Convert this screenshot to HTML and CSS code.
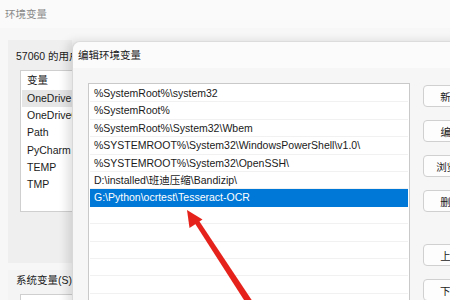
FILE: index.html
```html
<!DOCTYPE html>
<html lang="zh-CN">

<head>
    <meta charset="UTF-8">
    <title>编辑环境变量</title>
    <link rel="stylesheet" href="styles.css">
</head>

<body>
    <div class="screen">
        <!-- Background window: 环境变量 -->
        <div class="env-window">
            <div class="env-title">环境变量</div>
            <div class="env-body">
                <div class="group user-group">
                    <p class="group-label">57060 的用户变量(U)</p>
                    <div class="var-list">
                        <div class="var-head">变量</div>
                        <div class="var-row hover">OneDrive</div>
                        <div class="var-row">OneDriveConsumer</div>
                        <div class="var-row">Path</div>
                        <div class="var-row">PyCharm</div>
                        <div class="var-row">TEMP</div>
                        <div class="var-row">TMP</div>
                    </div>
                </div>
                <div class="group sys-group">
                    <p class="group-label">系统变量(S)</p>
                    <div class="var-list"></div>
                </div>
            </div>
        </div>

        <!-- Foreground dialog: 编辑环境变量 -->
        <div class="edit-dialog">
            <div class="dialog-title">编辑环境变量</div>
            <div class="dialog-body">
                <div class="path-list">
                    <div class="path-row">%SystemRoot%\system32</div>
                    <div class="path-row">%SystemRoot%</div>
                    <div class="path-row">%SystemRoot%\System32\Wbem</div>
                    <div class="path-row">%SYSTEMROOT%\System32\WindowsPowerShell\v1.0\</div>
                    <div class="path-row">%SYSTEMROOT%\System32\OpenSSH\</div>
                    <div class="path-row">D:\installed\班迪压缩\Bandizip\</div>
                    <div class="path-row selected">G:\Python\ocrtest\Tesseract-OCR</div>
                    <div class="path-row"></div>
                    <div class="path-row"></div>
                    <div class="path-row"></div>
                    <div class="path-row"></div>
                    <div class="path-row"></div>
                    <div class="path-row"></div>
                </div>
                <div class="side-buttons">
                    <div class="btn-group">
                        <button class="btn">新建(N)</button>
                        <button class="btn">编辑(E)</button>
                        <button class="btn">浏览(B)...</button>
                        <button class="btn">删除(D)</button>
                    </div>
                    <div class="btn-group">
                        <button class="btn">上移(U)</button>
                        <button class="btn">下移(O)</button>
                    </div>
                </div>
            </div>
        </div>

        <!-- Red annotation arrow -->
        <svg class="arrow" width="450" height="300" viewBox="0 0 450 300">
            <polygon points="187,210 189.5,228 202.5,219.5" fill="#e5231c" />
            <polygon points="194,222 198.5,220 255,305 248.5,307" fill="#e5231c" />
        </svg>
    </div>
</body>

</html>
```

FILE: styles.css
```css
/* Page and background window */
body {
    margin: 0;
    font-family: 'Liberation Sans', 'Noto Sans CJK SC', sans-serif;
    font-size: 10.5px;
    color: #1a1a1a;
}

.screen {
    width: 450px;
    height: 300px;
    overflow: hidden;
    position: relative;
    background-color: #f7f7f7;
}

.env-title {
    height: 28px;
    line-height: 28px;
    padding-left: 5px;
    color: #8a8a8a;
    background-color: #fafafa;
}

.env-body {
    width: 72px;
    overflow: hidden;
    display: flex;
    flex-direction: column;
    gap: 7px;
    padding: 12px 0 0 8px;
    box-sizing: border-box;
}

.group {
    width: 200px;
    background-color: #efefef;
    padding: 7px 0 0 8px;
}

.user-group {
    height: 216px;
}

.sys-group {
    background-color: #f4f4f4;
    height: 40px;
    padding-top: 1px;
}

.group-label {
    margin: 0 0 5px 0;
    height: 18px;
    line-height: 18px;
    white-space: nowrap;
}

.var-list {
    background-color: #fff;
    border: 1px solid #cfcfcf;
    height: 140px;
    padding-left: 1px;
    margin-left: 4px;
}

.var-head {
    height: 18px;
    line-height: 18px;
    padding: 0 0 0 5px;
    margin-bottom: 1px;
}

.var-row {
    height: 17.2px;
    line-height: 17.2px;
    padding-left: 5px;
    white-space: nowrap;
}

.var-row.hover {
    background-color: #e6e6e6;
}

/* Foreground dialog */
.edit-dialog {
    position: absolute;
    left: 72px;
    top: 41px;
    width: 420px;
    height: 280px;
    background-color: #f6f6f6;
    border-top-left-radius: 8px;
    border-left: 1px solid #d8d8d8;
    border-top: 1px solid #dcdcdc;
    box-shadow: -5px 0 10px rgba(0, 0, 0, 0.12);
}

.dialog-title {
    height: 26px;
    line-height: 26px;
    padding-left: 5px;
    background-color: #fbfbfb;
    border-top-left-radius: 8px;
}

.dialog-body {
    display: flex;
    gap: 13px;
    padding: 15px 0 0 15px;
}

.path-list {
    flex-shrink: 0;
    width: 318px;
    height: 230px;
    background-color: #fff;
    border: 1px solid #c9c9c9;
    padding: 1px;
}

.path-row {
    height: 17.4px;
    line-height: 17.4px;
    padding-left: 4px;
    white-space: nowrap;
    overflow: hidden;
    border-bottom: 1px solid #f1f1f1;
    box-sizing: border-box;
}

.path-row.selected {
    background-color: #0078d7;
    color: #fff;
    border-bottom-color: #0078d7;
}

.side-buttons {
    flex-shrink: 0;
    display: flex;
    flex-direction: column;
    gap: 32px;
    padding-top: 2px;
}

.btn-group {
    display: flex;
    flex-direction: column;
    gap: 13px;
}

.btn {
    width: 70px;
    height: 22px;
    padding: 0;
    font-family: inherit;
    font-size: 10.5px;
    color: #1a1a1a;
    background-color: #fdfdfd;
    border: 1px solid #d0d0d0;
    border-radius: 4px;
}

/* Annotation overlay */
.arrow {
    position: absolute;
    left: 0;
    top: 0;
}
```
